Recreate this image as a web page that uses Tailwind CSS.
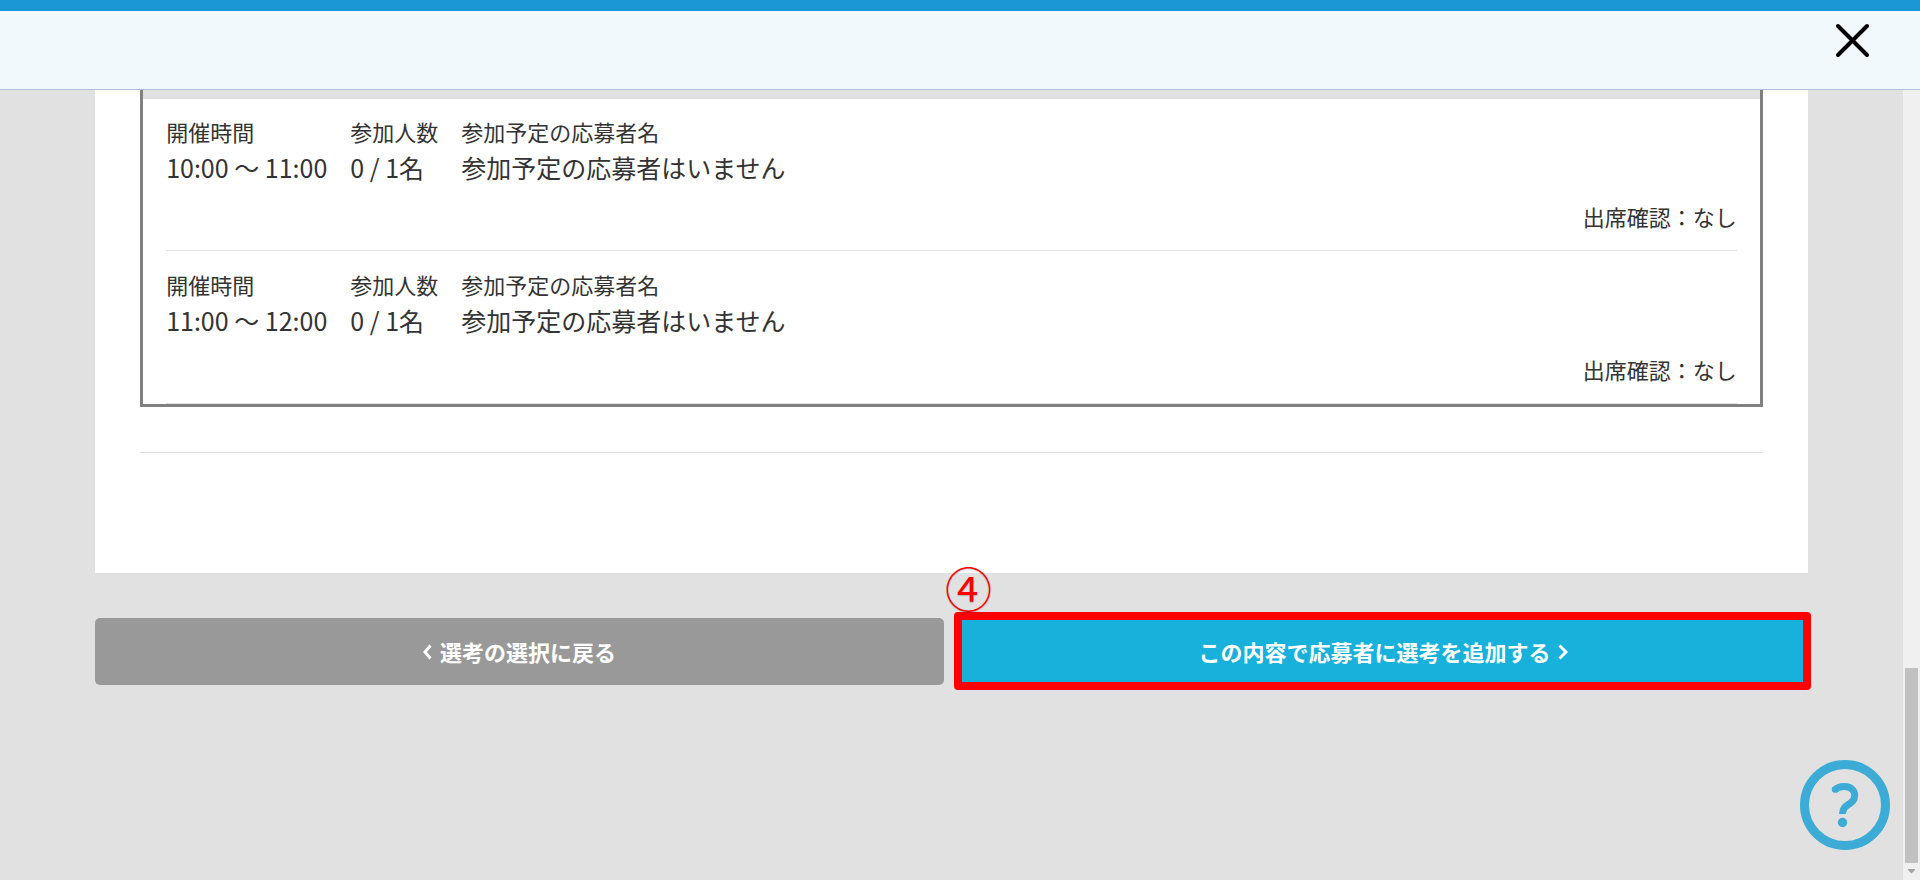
<!DOCTYPE html>
<html lang="ja">
<head>
  <meta charset="UTF-8">
  <title>選考の追加</title>
  <meta name="viewport" content="width=device-width, initial-scale=1.0">
  <script src="https://cdn.jsdelivr.net/npm/@tailwindcss/browser@4"></script>
</head>
<body class="h-screen flex flex-col overflow-hidden bg-[#e1e1e1] text-[#333] font-['Noto_Sans_CJK_JP',sans-serif]">

  <header class="shrink-0 h-[90px] flex justify-end items-start border-t-[11px] border-t-[#1a97d5] border-b border-b-[#b4bedc] bg-[#f1f9fc] pt-3 pr-[50px]">
    <button type="button" aria-label="閉じる">
      <svg class="block size-[35px]" viewBox="0 0 35 35" fill="none" stroke="#000" stroke-width="4" stroke-linecap="round">
        <path d="M3 3l29 29M32 3L3 32"/>
      </svg>
    </button>
  </header>

  <div class="flex-1 min-h-0 flex">
    <main class="flex-1 min-w-0">
      <div class="w-[90%] mx-auto">

        <section class="bg-white px-[45px] pb-[120px]">
          <div class="border-3 border-t-0 border-[#808080]">
            <div class="h-[9px] bg-[#e1e1e1]"></div>
            <ul class="px-[23px]">
              <li class="pt-4 pb-[18px] border-b border-[#e1e1e1]">
                <div class="flex gap-[23px]">
                  <dl>
                    <dt class="text-[22px] leading-8">開催時間</dt>
                    <dd class="text-[25px] leading-10">10:00 〜 11:00</dd>
                  </dl>
                  <dl>
                    <dt class="text-[22px] leading-8">参加人数</dt>
                    <dd class="text-[25px] leading-10">0 / 1名</dd>
                  </dl>
                  <dl>
                    <dt class="text-[22px] leading-8">参加予定の応募者名</dt>
                    <dd class="text-[25px] leading-10">参加予定の応募者はいません</dd>
                  </dl>
                </div>
                <p class="mt-[13px] text-right text-[22px] leading-8">出席確認：なし</p>
              </li>
              <li class="pt-[17px] pb-[18px] border-b border-[#e1e1e1]">
                <div class="flex gap-[23px]">
                  <dl>
                    <dt class="text-[22px] leading-8">開催時間</dt>
                    <dd class="text-[25px] leading-10">11:00 〜 12:00</dd>
                  </dl>
                  <dl>
                    <dt class="text-[22px] leading-8">参加人数</dt>
                    <dd class="text-[25px] leading-10">0 / 1名</dd>
                  </dl>
                  <dl>
                    <dt class="text-[22px] leading-8">参加予定の応募者名</dt>
                    <dd class="text-[25px] leading-10">参加予定の応募者はいません</dd>
                  </dl>
                </div>
                <p class="mt-[13px] text-right text-[22px] leading-8">出席確認：なし</p>
              </li>
            </ul>
          </div>
          <hr class="mt-[45px] border-[#e1e1e1]">
        </section>

        <div class="mt-[45px] flex gap-[15px]">
          <button type="button" class="flex-1 h-[67px] flex items-center justify-center gap-2 rounded-[5px] bg-[#999] text-white text-[22px] font-bold">
            <svg class="w-[9px] h-4" viewBox="0 0 9 16" fill="none" stroke="currentColor" stroke-width="3"><path d="M7.5 1.5L2 8l5.500 6.500"/></svg>
            選考の選択に戻る
          </button>
          <div class="relative flex-1">
            <button type="button" class="w-full h-[67px] flex items-center justify-center gap-2 rounded-[5px] bg-[#18b1dc] text-white text-[22px] font-bold">
              この内容で応募者に選考を追加する
              <svg class="w-[10px] h-4" viewBox="0 0 10 16" fill="none" stroke="currentColor" stroke-width="3"><path d="M1.500 1.500L8 8l-6.500 6.500"/></svg>
            </button>
            <!-- step marker -->
            <div class="absolute -top-1.5 -bottom-[5px] -left-[5px] -right-[3px] rounded border-8 border-[#f00] pointer-events-none"></div>
            <span class="absolute -left-3.5 -top-[55px] text-[47px] leading-[48px] text-[#f00] text-shadow-xs">④</span>
          </div>
        </div>

      </div>
    </main>

    <!-- scrollbar -->
    <div class="w-[17px] shrink-0 flex flex-col items-center justify-end bg-[#f0f0f0]">
      <div class="w-[13px] h-[195px] bg-[#c1c1c1]"></div>
      <svg class="w-[17px] h-[17px]" viewBox="0 0 17 17" fill="#a3a3a3"><path d="M5 6h7v1L8.500 10.500L5 7z"/></svg>
    </div>
  </div>

  <button type="button" aria-label="ヘルプ" class="fixed right-[30px] bottom-[30px]">
    <svg class="block size-[90px]" viewBox="0 0 90 90" fill="none" stroke="#3cabd5">
      <circle cx="45" cy="45" r="40.500" stroke-width="9"/>
      <path d="M34 30.500C41 24 54.700 25.500 54.700 35.500C54.700 45.500 42.500 43 42.500 54" stroke-width="7"/>
      <circle cx="34.800" cy="29.800" r="2" stroke-width="2"/>
      <circle cx="42.500" cy="62.500" r="4.700" fill="#3cabd5" stroke="none"/>
    </svg>
  </button>

</body>
</html>
